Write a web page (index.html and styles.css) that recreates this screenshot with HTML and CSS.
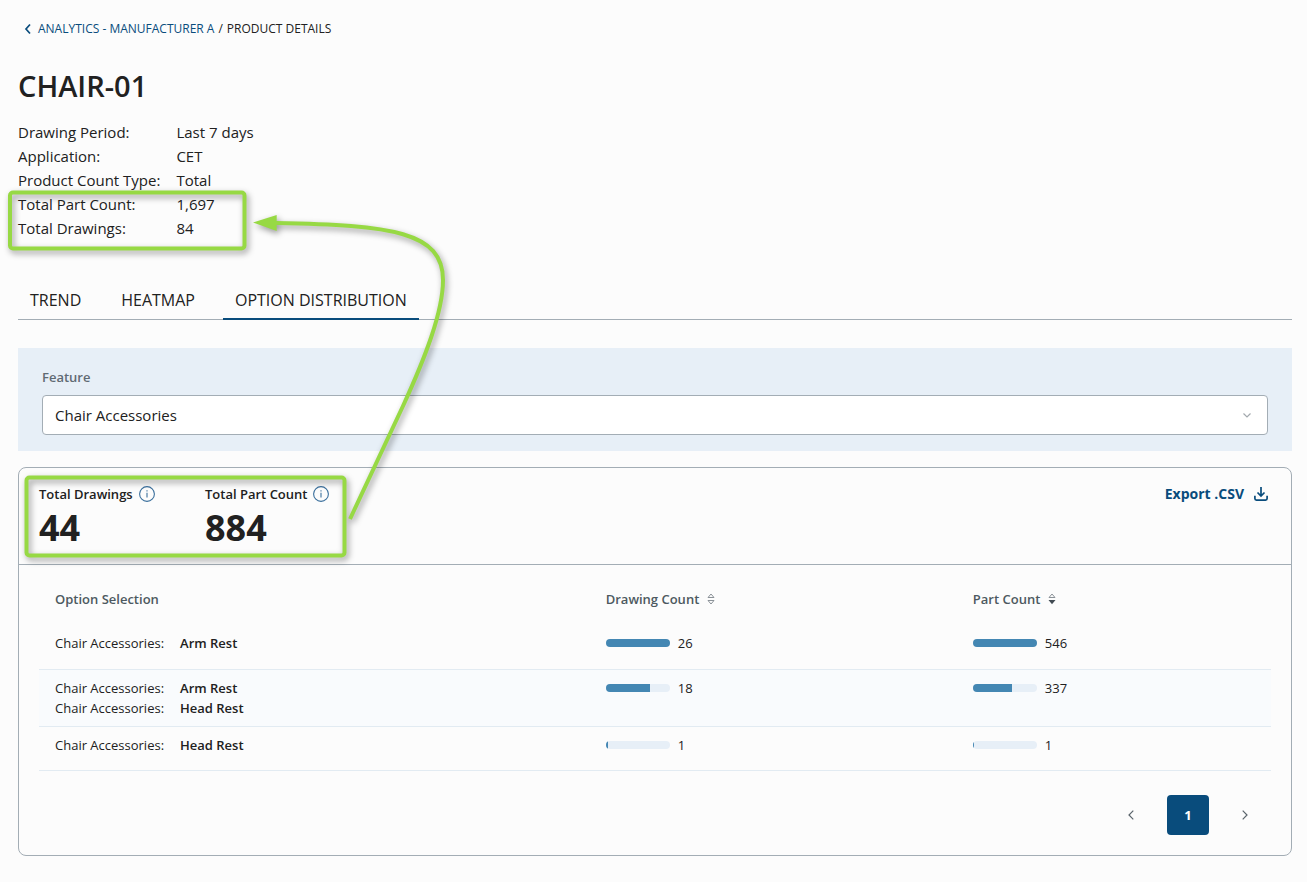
FILE: index.html
```html
<!DOCTYPE html>
<html lang="en">
<head>
    <meta charset="UTF-8">
    <meta name="viewport" content="width=device-width, initial-scale=1.0">
    <title>Product Details</title>
    <link rel="stylesheet" href="styles.css">
</head>
<body>
    <div class="container">
        <nav class="breadcrumb">
            <svg class="back-icon" width="8" height="12" viewBox="0 0 8 12"><path d="M6 1.5 L2 6 L6 10.5" fill="none" stroke="currentColor" stroke-width="1.7"/></svg>
            <a href="#">ANALYTICS - MANUFACTURER A</a>
            <span>/</span>
            <span>PRODUCT DETAILS</span>
        </nav>

        <h1>CHAIR-01</h1>

        <dl class="details">
            <dt>Drawing Period:</dt><dd>Last 7 days</dd>
            <dt>Application:</dt><dd>CET</dd>
            <dt>Product Count Type:</dt><dd>Total</dd>
            <dt>Total Part Count:</dt><dd>1,697</dd>
            <dt>Total Drawings:</dt><dd>84</dd>
        </dl>

        <div class="tabs">
            <button class="tab">TREND</button>
            <button class="tab">HEATMAP</button>
            <button class="tab active">OPTION DISTRIBUTION</button>
        </div>

        <div class="filter">
            <label for="feature">Feature</label>
            <div class="select-box">
                <select id="feature">
                    <option>Chair Accessories</option>
                </select>
                <svg class="select-arrow" width="8" height="5" viewBox="0 0 8 5"><path d="M0.5 0.5 L4 4 L7.5 0.5" fill="none" stroke="#a3a9ae" stroke-width="1.2"/></svg>
            </div>
        </div>

        <div class="card">
            <div class="card-header">
                <div class="stat">
                    <div class="stat-label">Total Drawings
                        <svg width="16" height="16" viewBox="0 0 16 16"><circle cx="8" cy="8" r="7.4" fill="none" stroke="#3a6f9c" stroke-width="1.1"/><path d="M8 6.8 V11.6 M8 4.2 V5.5" stroke="#3a6f9c" stroke-width="1.1"/></svg>
                    </div>
                    <div class="stat-value">44</div>
                </div>
                <div class="stat">
                    <div class="stat-label">Total Part Count
                        <svg width="16" height="16" viewBox="0 0 16 16"><circle cx="8" cy="8" r="7.4" fill="none" stroke="#3a6f9c" stroke-width="1.1"/><path d="M8 6.8 V11.6 M8 4.2 V5.5" stroke="#3a6f9c" stroke-width="1.1"/></svg>
                    </div>
                    <div class="stat-value">884</div>
                </div>
                <button class="export-button">Export .CSV
                    <svg width="14" height="14" viewBox="0 0 14 14"><path d="M7 0 V9 M3.5 5.5 L7 9 L10.5 5.5 M0.9 8.8 V11.6 Q0.9 13.1 2.4 13.1 H11.6 Q13.1 13.1 13.1 11.6 V8.8" fill="none" stroke="currentColor" stroke-width="1.7"/></svg>
                </button>
            </div>

            <div class="table-container">
                <table>
                    <thead>
                        <tr>
                            <th class="col-option">Option Selection</th>
                            <th class="col-drawing">
                                <button class="sort-button">Drawing Count
                                    <svg width="8" height="12" viewBox="0 0 8 12"><path d="M1 4.5 L4 1 L7 4.5 Z M1 7.5 L4 11 L7 7.5 Z" fill="none" stroke="#8b9298"/></svg>
                                </button>
                            </th>
                            <th class="col-part">
                                <button class="sort-button">Part Count
                                    <svg width="8" height="12" viewBox="0 0 8 12"><path d="M1 4.5 L4 1 L7 4.5 Z" fill="none" stroke="#8b9298"/><path d="M0.5 7 H7.5 L4 11.3 Z" fill="#414b52"/></svg>
                                </button>
                            </th>
                        </tr>
                    </thead>
                    <tbody>
                        <tr>
                            <td>
                                <div class="option"><span>Chair Accessories:</span><b>Arm Rest</b></div>
                            </td>
                            <td><div class="count"><div class="bar"><div class="fill" style="width: 100%"></div></div>26</div></td>
                            <td><div class="count"><div class="bar"><div class="fill" style="width: 100%"></div></div>546</div></td>
                        </tr>
                        <tr>
                            <td>
                                <div class="option"><span>Chair Accessories:</span><b>Arm Rest</b></div>
                                <div class="option"><span>Chair Accessories:</span><b>Head Rest</b></div>
                            </td>
                            <td><div class="count"><div class="bar"><div class="fill" style="width: 69%"></div></div>18</div></td>
                            <td><div class="count"><div class="bar"><div class="fill" style="width: 61%"></div></div>337</div></td>
                        </tr>
                        <tr>
                            <td>
                                <div class="option"><span>Chair Accessories:</span><b>Head Rest</b></div>
                            </td>
                            <td><div class="count"><div class="bar"><div class="fill" style="width: 4%"></div></div>1</div></td>
                            <td><div class="count"><div class="bar"><div class="fill" style="width: 1%"></div></div>1</div></td>
                        </tr>
                    </tbody>
                </table>

                <div class="pagination">
                    <button class="page-button" aria-label="Previous page">
                        <svg width="6" height="10" viewBox="0 0 6 10"><path d="M5.3 0.7 L1 5 L5.3 9.3" fill="none" stroke="currentColor" stroke-width="1.2"/></svg>
                    </button>
                    <button class="page-button current">1</button>
                    <button class="page-button" aria-label="Next page">
                        <svg width="6" height="10" viewBox="0 0 6 10"><path d="M0.7 0.7 L5 5 L0.7 9.3" fill="none" stroke="currentColor" stroke-width="1.2"/></svg>
                    </button>
                </div>
            </div>
        </div>
    </div>

    <!-- Callout boxes and arrow over the totals -->
    <svg class="callout" width="460" height="570" viewBox="0 0 460 570">
        <g fill="none" stroke="#97d944" stroke-width="4">
            <rect x="10" y="192.5" width="234.5" height="56" rx="3"/>
            <rect x="26.5" y="477.5" width="318" height="78" rx="3"/>
            <path d="M350 519 L403 406 C425 358 443 312 443 280 C443 232 392 225 276 223"/>
        </g>
        <path d="M253 222.5 L276.7 215 V231 Z" fill="#97d944"/>
    </svg>
</body>
</html>
```
FILE: styles.css
```css
* {
    box-sizing: border-box;
}

body {
    margin: 0;
    background-color: #fcfcfc;
    color: #212121;
    font-family: "Segoe UI", "Open Sans", "Noto Sans", sans-serif;
    font-size: 15px;
    line-height: 24px;
}

button {
    background: none;
    border: none;
    padding: 0;
    font: inherit;
    color: inherit;
    cursor: pointer;
}

.container {
    padding: 17px 15px 24px 18px;
}

.breadcrumb {
    display: flex;
    align-items: center;
    gap: 4px;
    padding-left: 6px;
    font-size: 12px;
    font-weight: 500;
}

.breadcrumb a,
.back-icon {
    color: #094c7c;
    text-decoration: none;
}

.back-icon {
    margin-right: 2px;
}

h1 {
    margin: 25px 0 14px;
    font-size: 29px;
    line-height: 40px;
    font-weight: 600;
}

.details {
    display: grid;
    grid-template-columns: max-content 1fr;
    column-gap: 16px;
    margin: 0;
}

.details dd {
    margin: 0;
}

/* Tabs */
.tabs {
    display: flex;
    gap: 16px;
    margin-top: 40px;
    border-bottom: 1px solid #a3adb5;
}

.tab {
    margin-bottom: -1px;
    padding: 8px 12px 6px;
    border-bottom: 2px solid transparent;
    font-size: 16px;
    font-weight: 500;
}

.tab.active {
    border-bottom-color: #094c7c;
}

/* Feature filter */
.filter {
    margin-top: 28px;
    padding: 17px 24px 16px;
    background-color: #e7eff7;
}

.filter label {
    display: block;
    margin-bottom: 6px;
    color: #5f6a73;
    font-size: 13px;
    font-weight: 600;
}

.select-box {
    position: relative;
}

.select-box select {
    display: block;
    width: 100%;
    height: 40px;
    padding: 0 12px;
    border: 1px solid #a3adb5;
    border-radius: 4px;
    background-color: #fff;
    color: inherit;
    font: inherit;
    appearance: none;
}

.select-arrow {
    position: absolute;
    right: 17px;
    top: 18px;
}

/* Results card */
.card {
    margin-top: 16px;
    border: 1px solid #a3adb5;
    border-radius: 8px;
}

.card-header {
    display: flex;
    align-items: flex-start;
    padding: 14px 23px 14px 20px;
    border-bottom: 1px solid #a3adb5;
}

.stat {
    min-width: 166px;
}

.stat-label,
.export-button {
    display: flex;
    align-items: center;
    gap: 6px;
    font-size: 13px;
    font-weight: 600;
}

.stat-value {
    font-size: 36px;
    line-height: 44px;
    font-weight: 700;
}

.export-button {
    gap: 10px;
    margin-left: auto;
    color: #094c7c;
    font-size: 14px;
    font-weight: 700;
}

.table-container {
    padding: 12px 20px 20px;
}

table {
    width: 100%;
    border-collapse: collapse;
    table-layout: fixed;
    font-size: 13px;
    line-height: 20px;
}

th {
    padding: 12px 16px 16px;
    color: #4d5960;
    font-weight: 600;
    text-align: left;
}

td {
    height: 44px;
    padding: 8px 16px;
    border-bottom: 1px solid #e2ebf2;
    vertical-align: top;
}

.col-option {
    width: 44.7%;
}

.col-drawing {
    width: 29.8%;
}

.col-part {
    width: 25.5%;
}

tbody tr:nth-child(even) {
    background-color: #f9fbfd;
}

.sort-button {
    display: flex;
    align-items: center;
    gap: 8px;
}

.option {
    display: flex;
    gap: 16px;
}

.option b {
    font-weight: 600;
}

.count {
    display: flex;
    align-items: center;
    gap: 8px;
}

.bar {
    width: 64px;
    height: 8px;
    border-radius: 4px;
    background-color: #e7eff7;
    overflow: hidden;
}

.fill {
    height: 100%;
    background-color: #4487b3;
}

.pagination {
    display: flex;
    justify-content: flex-end;
    gap: 15px;
    margin-top: 24px;
    padding-right: 5px;
}

.page-button {
    display: flex;
    align-items: center;
    justify-content: center;
    width: 42px;
    height: 40px;
    border-radius: 4px;
    color: #5a646b;
    font-size: 13px;
    font-weight: 700;
}

.page-button.current {
    background-color: #094c7c;
    color: #fff;
}

.callout {
    position: absolute;
    top: 0;
    left: 0;
    pointer-events: none;
    filter: drop-shadow(2px 3px 3px rgba(0, 0, 0, 0.4));
}
```
